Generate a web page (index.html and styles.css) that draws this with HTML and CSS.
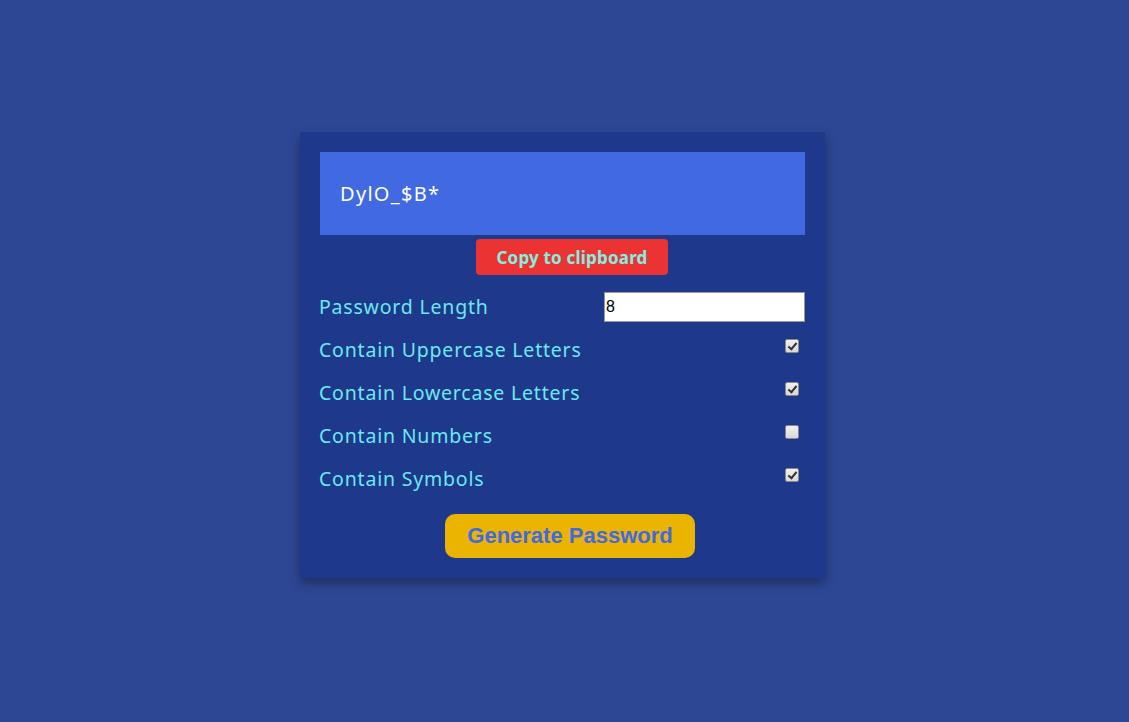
FILE: index.html
```html
<!DOCTYPE html>
<html>
<head>
<meta charset="utf-8">
<link rel="stylesheet" href="styles.css">
</head>
<body>
<div class="card">
  <div class="result">DylO_$B*</div>
  <div class="copy-wrap"><button class="copy">Copy to clipboard</button></div>
  <div class="rows">
    <div class="row"><label>Password Length</label><input class="len" type="number" value="8"></div>
    <div class="row"><label>Contain Uppercase Letters</label><input class="cb" type="checkbox" checked></div>
    <div class="row"><label>Contain Lowercase Letters</label><input class="cb" type="checkbox" checked></div>
    <div class="row"><label>Contain Numbers</label><input class="cb" type="checkbox"></div>
    <div class="row"><label>Contain Symbols</label><input class="cb" type="checkbox" checked></div>
  </div>
  <div class="gen-wrap"><button class="gen">Generate Password</button></div>
</div>
</body>
</html>
```
FILE: styles.css
```css
html, body { margin: 0; padding: 0; }
body {
  background: #2d4794;
  height: 722px;
  display: flex;
  align-items: flex-start;
  justify-content: center;
  font-family: "Noto Sans", sans-serif;
}
.card {
  margin-top: 132px;
  margin-right: 4px;
  width: 485px;
  padding: 20px;
  background: #1e388c;
  box-shadow: 0 5px 10px rgba(0,0,0,0.35);
}
.result {
  height: 83px;
  background: #4169e1;
  color: #fff;
  font-size: 20px;
  letter-spacing: 1.3px;
  display: flex;
  align-items: center;
  padding-left: 20px;
  box-sizing: border-box;
}
.copy-wrap { display: flex; justify-content: center; margin-top: 4px; padding-left: 19px; }
.copy {
  width: 192px;
  height: 36px;
  border: none;
  border-radius: 4px;
  background: #ec3333;
  color: #80f0e0;
  font-family: "Noto Sans", sans-serif;
  font-weight: 700;
  font-size: 17px;
  letter-spacing: 0.2px;
  padding: 0;
}
.rows { margin-top: 17px; display: flex; flex-direction: column; gap: 13px; }
.row {
  height: 30px;
  display: flex;
  align-items: center;
  justify-content: space-between;
}
.row label { color: #6ae9f0; font-size: 19.5px; letter-spacing: 0.8px; margin: -2px 0 0 -1px; }
.len {
  width: 201px;
  height: 30px;
  box-sizing: border-box;
  border: 1px solid #999;
  padding: 0 1px;
  font-family: Arial, "Liberation Sans", sans-serif;
  font-size: 16px;
}
.cb {
  -webkit-appearance: none;
  appearance: none;
  position: relative;
  margin: 0 6px 9px 0;
  width: 14px;
  height: 14px;
  box-sizing: border-box;
  border: 1px solid #8a8a8a;
  border-radius: 2px;
  background: linear-gradient(#f0f0f0, #d8d8d8);
}
.cb:checked::after {
  content: "";
  position: absolute;
  left: 4px;
  top: 1px;
  width: 3px;
  height: 7px;
  border-right: 2px solid #333;
  border-bottom: 2px solid #333;
  transform: rotate(40deg);
}
.gen-wrap { display: flex; justify-content: center; margin-top: 20px; padding-left: 15px; }
.gen {
  width: 250px;
  height: 44px;
  border: none;
  border-radius: 10px;
  background: #ebb401;
  color: #4169e1;
  font-family: "Liberation Sans", Arial, sans-serif;
  font-weight: 700;
  font-size: 22px;
  padding: 0;
}
```
